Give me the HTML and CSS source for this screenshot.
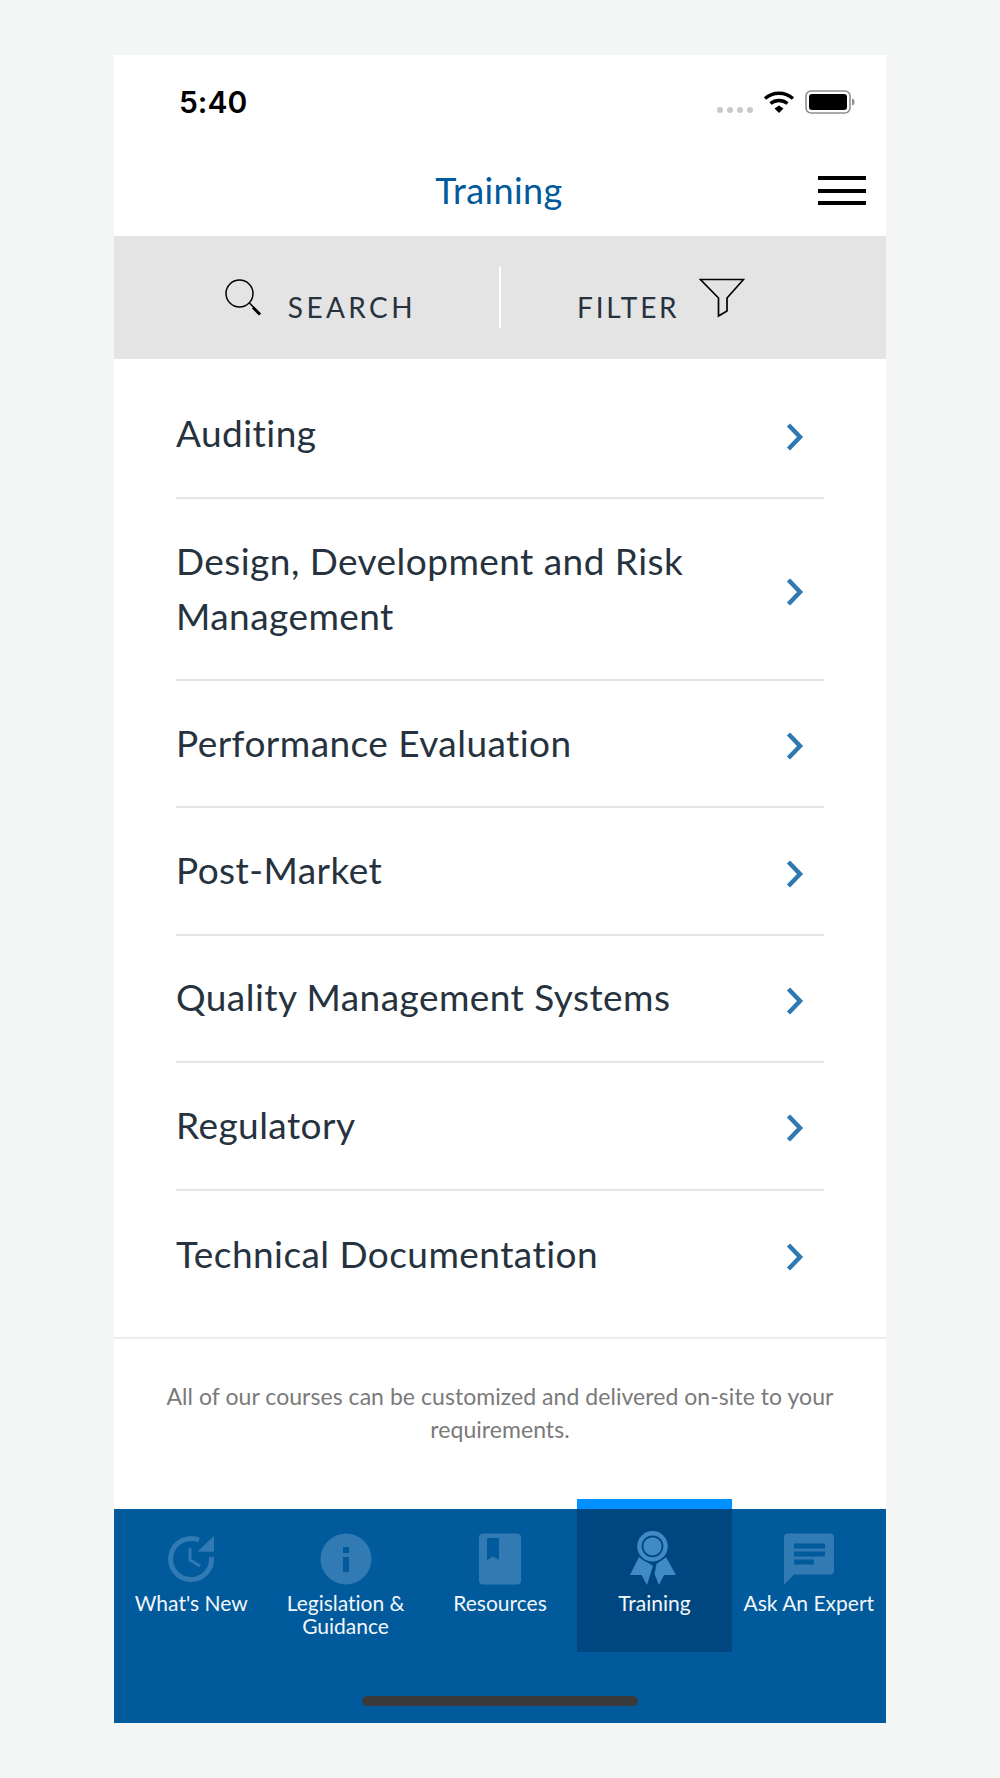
FILE: index.html
```html
<!DOCTYPE html>
<html lang="en">
<head>
<meta charset="utf-8">
<title>Training</title>
<link rel="stylesheet" href="styles.css">
</head>
<body>
<main class="phone">
  <div class="status">
    <span class="time">5:40</span>
    <div class="status-icons">
      <span class="dots"><i></i><i></i><i></i><i></i></span>
      <svg class="wifi" width="32" height="24" viewBox="0 0 32 24"><path d="M2 8.500C10 1.500 22 1.500 30 8.500" fill="none" stroke="#000" stroke-width="3.400"/><path d="M7.500 13.500C12.500 9.500 19.500 9.500 24.500 13.500" fill="none" stroke="#000" stroke-width="3.400"/><path d="M11.500 18.500L16 15.500L20.500 18.500L16 23Z" fill="#000"/></svg>
      <svg class="battery" width="50" height="24" viewBox="0 0 50 24"><rect x="1" y="1" width="44" height="22" rx="5" fill="none" stroke="#8e8e8e" stroke-width="1.600"/><rect x="4" y="4" width="38" height="16" rx="3" fill="#000"/><path d="M47 8.500C49 9 49.500 10.500 49.500 12C49.500 13.500 49 15 47 15.500Z" fill="#8e8e8e"/></svg>
    </div>
  </div>
  <header class="title-bar">
    <h1 class="title">Training</h1>
    <div class="burger"><i></i><i></i><i></i></div>
  </header>
  <div class="tools">
    <div class="tool tool-search">
      <svg class="tool-icon" width="38" height="40" viewBox="0 0 38 40"><circle cx="15.500" cy="15.500" r="13.500" fill="none" stroke="#000" stroke-width="1.500"/><path d="M25.500 25L36 36" stroke="#000" stroke-width="1.500"/><path d="M29 29.500L36 36.500" stroke="#000" stroke-width="3"/></svg>
      <span class="tool-label">SEARCH</span>
    </div>
    <div class="tool tool-filter">
      <span class="tool-label">FILTER</span>
      <svg class="tool-icon" width="46" height="40" viewBox="0 0 46 40"><path d="M1.500 1.500H44.500L28 20V33L19.500 38V20Z" fill="none" stroke="#000" stroke-width="1.700"/></svg>
    </div>
  </div>
  <ul class="list">
    <li class="row row-first"><span>Auditing</span><svg class="chev" width="18" height="28" viewBox="0 0 18 28"><path d="M2.500 2L14 14L2.500 26" fill="none" stroke="#2f79b3" stroke-width="4.500"/></svg></li>
    <li class="row row-double"><span>Design, Development and Risk Management</span><svg class="chev" width="18" height="28" viewBox="0 0 18 28"><path d="M2.500 2L14 14L2.500 26" fill="none" stroke="#2f79b3" stroke-width="4.500"/></svg></li>
    <li class="row"><span>Performance Evaluation</span><svg class="chev" width="18" height="28" viewBox="0 0 18 28"><path d="M2.500 2L14 14L2.500 26" fill="none" stroke="#2f79b3" stroke-width="4.500"/></svg></li>
    <li class="row"><span>Post-Market</span><svg class="chev" width="18" height="28" viewBox="0 0 18 28"><path d="M2.500 2L14 14L2.500 26" fill="none" stroke="#2f79b3" stroke-width="4.500"/></svg></li>
    <li class="row"><span>Quality Management Systems</span><svg class="chev" width="18" height="28" viewBox="0 0 18 28"><path d="M2.500 2L14 14L2.500 26" fill="none" stroke="#2f79b3" stroke-width="4.500"/></svg></li>
    <li class="row"><span>Regulatory</span><svg class="chev" width="18" height="28" viewBox="0 0 18 28"><path d="M2.500 2L14 14L2.500 26" fill="none" stroke="#2f79b3" stroke-width="4.500"/></svg></li>
    <li class="row row-last"><span>Technical Documentation</span><svg class="chev" width="18" height="28" viewBox="0 0 18 28"><path d="M2.500 2L14 14L2.500 26" fill="none" stroke="#2f79b3" stroke-width="4.500"/></svg></li>
  </ul>
  <p class="note">All of our courses can be customized and delivered on-site to your requirements.</p>
  <nav class="tabs">
    <div class="tab">
      <svg class="tab-icon" width="52" height="52" viewBox="0 0 52 52"><path d="M46.500 24A20.500 20.500 0 1 1 34 7.100" fill="none" stroke="#317ab3" stroke-width="5"/><path d="M49 3V18.700H32.300Z" fill="#317ab3"/><path d="M25 15.300V27L35 33" fill="none" stroke="#317ab3" stroke-width="3"/></svg>
      <span class="tab-label">What's New</span>
    </div>
    <div class="tab">
      <svg class="tab-icon" width="52" height="52" viewBox="0 0 52 52"><circle cx="26" cy="26" r="25.500" fill="#317ab3"/><rect x="23" y="14" width="6" height="6" fill="#005a9c"/><rect x="23" y="24" width="6" height="15" fill="#005a9c"/></svg>
      <span class="tab-label">Legislation &amp;<br>Guidance</span>
    </div>
    <div class="tab">
      <svg class="tab-icon" width="52" height="52" viewBox="0 0 52 52"><rect x="5" y="0.500" width="42" height="51" rx="4" fill="#317ab3"/><path d="M13 5H25V27L19 23.500L13 27Z" fill="#005a9c"/></svg>
      <span class="tab-label">Resources</span>
    </div>
    <div class="tab tab-active">
      <svg class="tab-icon" width="52" height="56" viewBox="0 0 52 56"><path d="M11 26L2 44H13.500L19 54L25 35Z" fill="#408ac6"/><path d="M38 26L48 44H36L31 54L26.500 43L28.500 33Z" fill="#408ac6"/><circle cx="24.500" cy="15.300" r="16.800" fill="#00477f"/><circle cx="24.500" cy="15.300" r="15.300" fill="#408ac6"/><circle cx="24.500" cy="15.300" r="10" fill="none" stroke="#00477f" stroke-width="1.800"/></svg>
      <span class="tab-label">Training</span>
    </div>
    <div class="tab">
      <svg class="tab-icon" width="52" height="52" viewBox="0 0 52 52"><path d="M5 0.500H47A4 4 0 0 1 51 4.500V37.500A4 4 0 0 1 47 41.500H11L1 52V4.500A4 4 0 0 1 5 0.500Z" fill="#317ab3"/><rect x="11" y="10.500" width="31" height="5" fill="#005a9c"/><rect x="11" y="18.500" width="31" height="5" fill="#005a9c"/><rect x="11" y="26.500" width="20" height="5" fill="#005a9c"/></svg>
      <span class="tab-label">Ask An Expert</span>
    </div>
    <div class="home-bar"></div>
  </nav>
</main>
</body>
</html>
```

FILE: styles.css
```css
* { box-sizing: border-box; }
html, body { margin: 0; padding: 0; }
body {
  background: #f4f6f5;
  padding: 55px 114px;
  height: 1778px;
  overflow: hidden;
  font-family: "Lato", "Liberation Sans", sans-serif;
  font-variant-ligatures: none;
}
.phone {
  width: 772px;
  height: 1668px;
  background: #fff;
  display: flex;
  flex-direction: column;
}
.status {
  height: 81px;
  display: flex;
  justify-content: space-between;
  align-items: flex-start;
  padding: 29px 31px 0 65px;
}
.time {
  font-family: "Inter", sans-serif;
  font-weight: 600;
  font-size: 30px;
  line-height: 36px;
  color: #000;
}
.status-icons {
  display: flex;
  align-items: center;
  gap: 10px;
  margin-top: 6px;
}
.dots { display: flex; gap: 3px; margin-top: 16px; margin-right: -1px; }
.dots i { width: 6px; height: 6px; border-radius: 50%; background: #c9c9c9; display: block; margin-right: 1px; }
.title-bar {
  height: 100px;
  position: relative;
  display: flex;
  justify-content: center;
  align-items: center;
}
.title {
  margin: 0;
  font-size: 36px;
  line-height: 44px;
  font-weight: 400;
  letter-spacing: 0.4px;
  color: #005a9c;
  padding: 7px 2px 0 0;
}
.burger {
  position: absolute;
  right: 20px;
  top: 40px;
  width: 48px;
  display: flex;
  flex-direction: column;
  gap: 8.500px;
}
.burger i { display: block; height: 4px; background: #000; }
.tools {
  height: 123px;
  background: #e4e4e4;
  display: flex;
  align-items: flex-start;
  padding-top: 31px;
}
.tool {
  display: flex;
  align-items: flex-start;
  height: 61px;
}
.tool-search {
  flex: none;
  width: 387px;
  justify-content: flex-end;
  gap: 26px;
  padding-right: 83px;
  border-right: 2px solid #fff;
}
.tool-filter { flex: 1; padding-left: 76px; gap: 20px; }
.tool-filter .tool-label { letter-spacing: 2.800px; }
.tool-icon { margin-top: 11px; }
.tool-label {
  font-size: 28px;
  line-height: 34px;
  letter-spacing: 3.400px;
  color: #26323e;
  margin-top: 23px;
}
.list {
  list-style: none;
  margin: 0;
  padding: 0 62px;
}
.row {
  height: 127.400px;
  display: flex;
  align-items: center;
  justify-content: space-between;
  padding: 0 20px 0 0;
  border-bottom: 2px solid #e4e6e6;
  font-size: 37px;
  line-height: 55px;
  letter-spacing: 0.450px;
  color: #26323e;
}
.row span { max-width: 540px; margin-top: -3px; }
.row-first { height: 140px; padding-top: 12px; }
.row-double { height: 182px; }
.row-last { border-bottom: 0; height: 146px; padding-bottom: 18px; }
.chev { flex: none; margin-top: 5px; }
.note {
  margin: 0;
  border-top: 2px solid #eceeee;
  padding: 41px 30px 0;
  height: 172px;
  text-align: center;
  font-size: 23px;
  line-height: 33px;
  letter-spacing: 0.050px;
  color: #7a7a7a;
}
.tabs {
  flex: 1;
  background: #005a9c;
  display: grid;
  grid-template-columns: repeat(5, 1fr);
  grid-template-rows: 143px;
  position: relative;
}
.tab {
  display: flex;
  flex-direction: column;
  align-items: center;
  text-align: center;
  padding-top: 24px;
  position: relative;
}
.tab-active {
  background: #004781;
  padding-top: 22px;
}
.tab-active::before {
  content: "";
  position: absolute;
  left: 0;
  right: 0;
  top: -10px;
  height: 10px;
  background: #0090ff;
}
.tab-icon { display: block; margin-bottom: 6px; }
.tab-active .tab-icon { margin-bottom: 4px; }
.tab-label {
  font-size: 21px;
  line-height: 23px;
  color: #f2f6fa;
  white-space: nowrap;
}
.home-bar {
  position: absolute;
  left: 248px;
  bottom: 17px;
  width: 276px;
  height: 10px;
  border-radius: 5px;
  background: #3a3a3a;
}
```
